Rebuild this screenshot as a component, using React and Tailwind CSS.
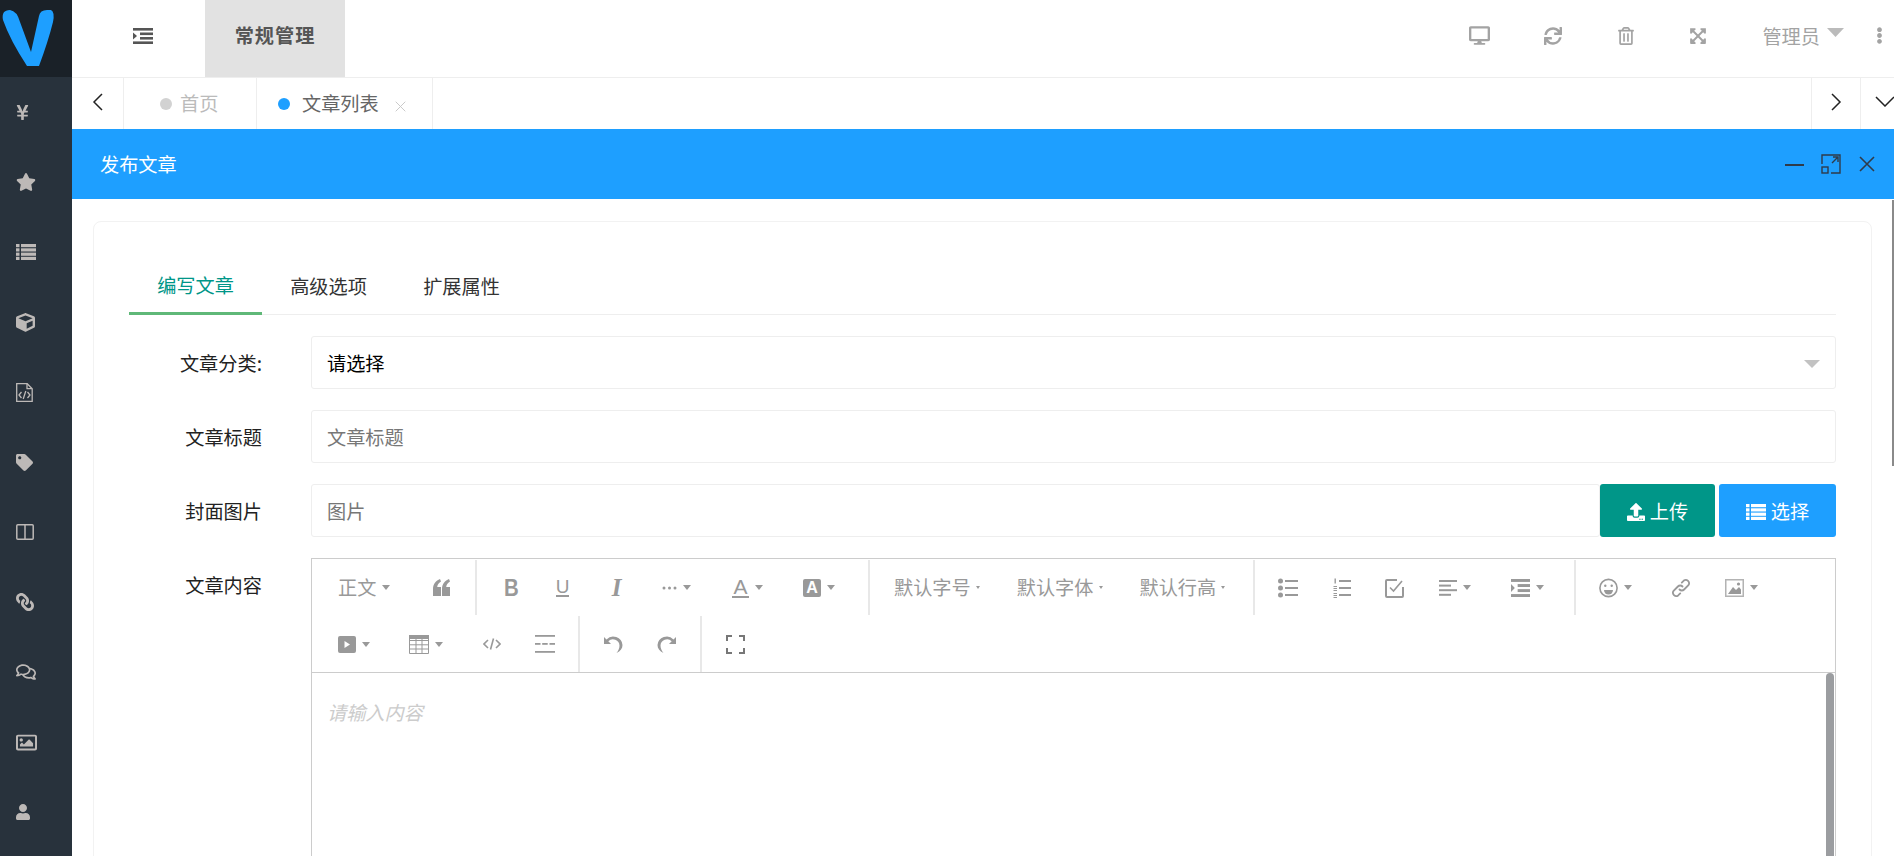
import React from 'react'
import {
  FaYenSign, FaStar, FaCube, FaTag, FaRegComments, FaRegImage, FaUser, FaDesktop, FaSync,
  FaRegTrashAlt, FaExpandArrowsAlt, FaEllipsisV, FaUpload, FaLink,
} from 'react-icons/fa'

const ListIcon = () => (
  <svg width="20" height="16" viewBox="0 0 20 16" fill="currentColor">
    <rect width="3.5" height="3.2" /><rect x="5" width="15" height="3.2" />
    <rect y="4.3" width="3.5" height="3.2" /><rect x="5" y="4.3" width="15" height="3.2" />
    <rect y="8.6" width="3.5" height="3.2" /><rect x="5" y="8.6" width="15" height="3.2" />
    <rect y="12.8" width="3.5" height="3.2" /><rect x="5" y="12.8" width="15" height="3.2" />
  </svg>
)

const Columns = () => (
  <svg width="18" height="16" viewBox="0 0 18 16" fill="none" stroke="currentColor" strokeWidth="1.5">
    <rect x="0.8" y="0.8" width="16.4" height="14.4" rx="1" />
    <path d="M9 1v14" />
  </svg>
)

const FileCode = () => (
  <svg width="17" height="19" viewBox="0 0 17 19" fill="none" stroke="currentColor" strokeWidth="1.3">
    <path d="M.7.7h10.5l5 5v12.6H.7Z" />
    <path d="M11 .7v5h5" />
    <path d="M5.5 9L3 12l2.5 3M11.5 9l2.5 3-2.5 3M9.8 8L7.2 16" />
  </svg>
)

const sideIcons = [
  <FaYenSign size={17} className="-ml-[2px]" />, <FaStar size={20} />, <ListIcon />, <FaCube size={19} />, <FileCode />,
  <FaTag size={17} />, <Columns />, <FaLink size={18} className="-scale-x-100" />, <FaRegComments size={20} />, <FaRegImage size={21} />, <FaUser size={16} className="-ml-[1px]" />,
]

const Logo = () => (
  <svg width="56" height="70" viewBox="0 0 56 70" fill="#1e9fff">
    <path d="M3 20Q1 10 10 10Q17 11 20 22L31 52L39 16Q40 10 47 10L51 10Q55 12 53 22Q48 42 39 66L27 66Q10 40 3 20Z" />
  </svg>
)

const IndentIcon = ({ w = 20, h = 16 }) => (
  <svg width={w} height={h} viewBox="0 0 20 16" fill="currentColor" preserveAspectRatio="none">
    <rect width="20" height="2.6" />
    <rect x="7" y="4.5" width="13" height="2.6" />
    <rect x="7" y="9" width="13" height="2.6" />
    <rect y="13.4" width="20" height="2.6" />
    <path d="M0 4.5L4 8L0 11.5Z" />
  </svg>
)

const Chevron = ({ d, w = 11, h = 18 }) => (
  <svg width={w} height={h} viewBox={`0 0 ${w} ${h}`} fill="none" stroke="currentColor" strokeWidth="1.5">
    <path d={d} />
  </svg>
)

const Cross = ({ size, width = 1.6 }) => (
  <svg width={size} height={size} viewBox="0 0 16 16" fill="none" stroke="currentColor" strokeWidth={width}>
    <path d="M1 1l14 14M15 1L1 15" />
  </svg>
)

const Caret = ({ small }) =>
  small ? (
    <svg width="4" height="3" viewBox="0 0 4 3" fill="#999" className="ml-[5px]"><path d="M0 0h4L2 3Z" /></svg>
  ) : (
    <svg width="8" height="5" viewBox="0 0 8 5" fill="#999" className="ml-[6px]"><path d="M0 0h8L4 5Z" /></svg>
  )

const Quote = () => (
  <svg width="17" height="17" viewBox="0 0 17 17" fill="currentColor">
    <path d="M0 17V10C0 5 3 1.5 7 0L8 2.5C5.5 4 4.4 5.8 4.2 8H8V17Z" />
    <path d="M9 17V10C9 5 12 1.5 16 0L17 2.5C14.5 4 13.4 5.8 13.2 8H17V17Z" />
  </svg>
)

const Dots = () => (
  <svg width="15" height="4" viewBox="0 0 15 4" fill="currentColor">
    <circle cx="2" cy="2" r="1.5" /><circle cx="7.5" cy="2" r="1.5" /><circle cx="13" cy="2" r="1.5" />
  </svg>
)

const BulletList = () => (
  <svg width="20" height="20" viewBox="0 0 20 20" fill="currentColor">
    <circle cx="2.5" cy="3" r="2.5" /><circle cx="2.5" cy="10" r="2.5" /><circle cx="2.5" cy="17" r="2.5" />
    <rect x="7" y="2" width="13" height="2" /><rect x="7" y="9" width="13" height="2" /><rect x="7" y="16" width="13" height="2" />
  </svg>
)

const NumList = () => (
  <svg width="18" height="20" viewBox="0 0 18 20" fill="currentColor">
    <rect x="1.5" y="0.5" width="1.4" height="5" /><rect x="0.5" y="8" width="3.5" height="1" /><rect x="0.5" y="10" width="3.5" height="1" /><rect x="0.5" y="12" width="3.5" height="1" /><rect x="0.5" y="15" width="3.5" height="1" /><rect x="0.5" y="17" width="3.5" height="1" /><rect x="0.5" y="19" width="3.5" height="1" />
    <rect x="6" y="2" width="12" height="2" /><rect x="6" y="9" width="12" height="2" /><rect x="6" y="16" width="12" height="2" />
  </svg>
)

const CheckBox = () => (
  <svg width="19" height="20" viewBox="0 0 19 20" fill="none" stroke="currentColor">
    <path d="M12 2H2a1 1 0 0 0-1 1v15a1 1 0 0 0 1 1h15a1 1 0 0 0 1-1V9" strokeWidth="2" />
    <path d="M5 9.5l3.5 3.5L17 3" strokeWidth="1.6" />
  </svg>
)

const AlignLeft = () => (
  <svg width="18" height="16" viewBox="0 0 18 16" fill="currentColor">
    <rect width="18" height="2" /><rect y="4.6" width="12" height="2" /><rect y="9.2" width="18" height="2" /><rect y="13.8" width="12" height="2" />
  </svg>
)

const Smile = () => (
  <svg width="19" height="20" viewBox="0 0 19 20" fill="none" stroke="currentColor" strokeWidth="1.6">
    <circle cx="9.5" cy="10" r="8.6" />
    <circle cx="6.3" cy="7.8" r="1.2" fill="currentColor" stroke="none" />
    <circle cx="12.7" cy="7.8" r="1.2" fill="currentColor" stroke="none" />
    <path d="M5 12h9a4.5 4.5 0 0 1-9 0Z" fill="currentColor" stroke="none" />
  </svg>
)

const ChainIcon = () => (
  <svg width="20" height="20" viewBox="0 0 20 20" fill="none" stroke="currentColor" strokeWidth="1.8" strokeLinecap="round">
    <path d="M8.5 11.5a3.2 3.2 0 0 0 4.6 0l4.3-4.3a3.3 3.3 0 0 0-4.6-4.6l-2 2" />
    <path d="M11.5 8.5a3.2 3.2 0 0 0-4.6 0l-4.3 4.3a3.3 3.3 0 0 0 4.6 4.6l2-2" />
  </svg>
)

const ImageIcon = () => (
  <svg width="19" height="18" viewBox="0 0 19 18" fill="currentColor">
    <path fillRule="evenodd" d="M0 0h19v18H0ZM1.5 1.5v15h16v-15Z" opacity="0.75" />
    <path d="M3 15l5-7 3 3 3-3 2 2.5V15Z" />
    <circle cx="13.5" cy="5" r="1.6" />
  </svg>
)

const Video = () => (
  <svg width="18" height="17" viewBox="0 0 18 17" fill="currentColor">
    <path fillRule="evenodd" d="M2 0h14a2 2 0 0 1 2 2v13a2 2 0 0 1-2 2H2a2 2 0 0 1-2-2V2a2 2 0 0 1 2-2ZM6.5 5v7L12 8.5Z" />
  </svg>
)

const TableIcon = () => (
  <svg width="20" height="19" viewBox="0 0 20 19" fill="none" stroke="currentColor" strokeWidth="1">
    <path d="M.5.5h19v18H.5ZM.5 5.5h19M.5 9.8h19M.5 14h19M7 4v14.5M13 4v14.5" />
    <rect x="0" y="0" width="20" height="4" fill="currentColor" stroke="none" />
  </svg>
)

const CodeIcon = () => (
  <svg width="18" height="12" viewBox="0 0 18 12" fill="none" stroke="currentColor" strokeWidth="1.6">
    <path d="M5 2L1 6l4 4M13 2l4 4-4 4M10.5 .5L7.5 11.5" />
  </svg>
)

const HrIcon = () => (
  <svg width="20" height="18" viewBox="0 0 20 18" fill="currentColor">
    <rect width="20" height="1.8" /><rect y="8" width="5.5" height="1.8" /><rect x="7.2" y="8" width="5.5" height="1.8" /><rect x="14.5" y="8" width="5.5" height="1.8" /><rect y="16" width="20" height="1.8" />
  </svg>
)

const Undo = ({ flip }) => (
  <svg width="19" height="18" viewBox="0 0 19 18" fill="currentColor" className={flip ? '-scale-x-100' : ''}>
    <path d="M0 2v7h7L4.3 6.3A6.5 6.5 0 0 1 15.5 10.5c0 2.6-1 5-3 7.5 4-2 6-4.5 6-8A9.3 9.3 0 0 0 2.5 4.5Z" />
  </svg>
)

const FullScreen = () => (
  <svg width="19" height="19" viewBox="0 0 19 19" fill="none" stroke="currentColor" strokeWidth="2">
    <path d="M1 6V1h5M13 1h5v5M18 13v5h-5M6 18H1v-5" />
  </svg>
)

const Tool = ({ children, ml = '', caret, small }) => (
  <div className={`flex items-center shrink-0 ${ml}`}>
    {children}
    {caret && <Caret small={small} />}
  </div>
)

const Toolbar = () => (
  <div className="border-b border-[#ccc] text-[#999]">
    <div className="flex h-[57px] py-[1px]">
      <div className="flex items-center w-[165px] pl-[26px] border-r-2 border-[#e8e8e8]">
        <Tool caret><span>正文</span></Tool>
        <Tool ml="ml-[43px]"><Quote /></Tool>
      </div>
      <div className="flex items-center w-[393px] pl-[27px] border-r-2 border-[#e8e8e8]">
        <Tool><span className="font-['Liberation_Sans'] font-bold text-[24px] leading-none w-[13px] scale-x-[0.85] origin-left">B</span></Tool>
        <Tool ml="ml-[39px]"><span className="font-['Liberation_Sans'] text-[19px] leading-[17px] border-b-2 border-[#999] w-[13px] flex justify-center">U</span></Tool>
        <Tool ml="ml-[41px]"><span className="font-['Liberation_Serif'] italic font-bold text-[25px] leading-none w-[13px] flex justify-center">I</span></Tool>
        <Tool ml="ml-[39px]" caret><Dots /></Tool>
        <Tool ml="ml-[41px]" caret><span className="font-['Liberation_Sans'] text-[21px] leading-[18px] border-b-2 border-[#999] w-[17px] flex justify-center">A</span></Tool>
        <Tool ml="ml-[40px]" caret><span className="bg-[#999] text-white rounded-[2px] font-['Liberation_Sans'] font-bold text-[16px] w-[18px] h-[18px] leading-[18px] flex justify-center">A</span></Tool>
      </div>
      <div className="flex items-center w-[385px] pl-[24px] border-r-2 border-[#e8e8e8]">
        <Tool caret small><span>默认字号</span></Tool>
        <Tool ml="ml-[37px]" caret small><span>默认字体</span></Tool>
        <Tool ml="ml-[37px]" caret small><span>默认行高</span></Tool>
      </div>
      <div className="flex items-center w-[321px] pl-[23px] border-r-2 border-[#e8e8e8]">
        <Tool><BulletList /></Tool>
        <Tool ml="ml-[35px]"><NumList /></Tool>
        <Tool ml="ml-[34px]"><CheckBox /></Tool>
        <Tool ml="ml-[35px]" caret><AlignLeft /></Tool>
        <Tool ml="ml-[40px]" caret><IndentIcon w={19} h={18} /></Tool>
      </div>
      <div className="flex items-center pl-[23px]">
        <Tool caret><Smile /></Tool>
        <Tool ml="ml-[39px]"><ChainIcon /></Tool>
        <Tool ml="ml-[34px]" caret><ImageIcon /></Tool>
      </div>
    </div>
    <div className="flex h-[56px]">
      <div className="flex items-center w-[268px] pl-[26px] border-r-2 border-[#e8e8e8]">
        <Tool caret><Video /></Tool>
        <Tool ml="ml-[39px]" caret><TableIcon /></Tool>
        <Tool ml="ml-[40px]"><CodeIcon /></Tool>
        <Tool ml="ml-[34px]"><HrIcon /></Tool>
      </div>
      <div className="flex items-center w-[122px] pl-[24px] border-r-2 border-[#e8e8e8]">
        <Tool><Undo /></Tool>
        <Tool ml="ml-[34px]"><Undo flip /></Tool>
      </div>
      <div className="flex items-center pl-[24px] text-[#777]"><FullScreen /></div>
    </div>
  </div>
)

const FormRow = ({ label, children, top }) => (
  <div className="flex mb-[21px]">
    <label className={`w-[133px] shrink-0 mr-[49px] text-right text-[#222] ${top ? 'pt-[12px] leading-[30px]' : 'h-[53px] leading-[55px]'}`}>{label}</label>
    <div className="flex-1 min-w-0">{children}</div>
  </div>
)

const TextField = ({ children, className = '' }) => (
  <div className={`h-[53px] border border-[#eee] rounded-[3px] pl-[15px] pt-[2px] flex items-center ${className}`}>{children}</div>
)

const App = () => {
  return (
    <div className="relative flex h-screen overflow-hidden bg-white text-[19.2px] [font-family:'Noto_Sans_CJK_SC','Noto_Sans',sans-serif]">
      <aside className="w-[72px] shrink-0 bg-[#28323c] text-[#bdb9b7]">
        <div className="h-[77px] bg-[#1a2128] overflow-hidden"><Logo /></div>
        {sideIcons.map((icon, i) => (
          <div key={i} className="h-[70px] flex items-center pl-[16px]">{icon}</div>
        ))}
      </aside>

      <main className="flex-1 min-w-0 flex flex-col">
        <header className="h-[77px] shrink-0 flex items-center text-[#a3a3a3]">
          <div className="w-[133px] pl-[61px] pb-[5px] text-[#555]"><IndentIcon /></div>
          <div className="w-[140px] h-full pb-[6px] bg-[#e2e2e2] text-[#555] font-bold flex items-center justify-center tracking-[1px]">常规管理</div>
          <div className="ml-auto flex items-center pb-[5px]">
            <FaDesktop size={21} />
            <FaSync size={18} className="ml-[54px]" />
            <FaRegTrashAlt size={18} className="ml-[55px]" />
            <FaExpandArrowsAlt size={18} className="ml-[54px]" />
            <span className="ml-[55px]">管理员</span>
            <svg width="17" height="9" viewBox="0 0 17 9" fill="#bbb" className="ml-[7px] mb-[6px]"><path d="M0 0h17L8.5 9Z" /></svg>
            <FaEllipsisV size={17} className="ml-[27px] mr-[6px]" />
          </div>
        </header>

        <nav className="h-[52px] shrink-0 border-t border-[#eee] flex items-stretch">
          <div className="w-[52px] border-r border-[#eee] flex items-center justify-center text-[#222] pb-[4px]"><Chevron d="M10 1L2 9l8 8" /></div>
          <div className="w-[133px] border-r border-[#eee] flex items-center pl-[36px] text-[#bbb]">
            <span className="w-[12px] h-[12px] rounded-full bg-[#d2d2d2] mr-[8px]" />首页
          </div>
          <div className="w-[176px] border-r border-[#eee] flex items-center pl-[21px] text-[#666]">
            <span className="w-[12px] h-[12px] rounded-full bg-[#1e9fff] mr-[12px]" />文章列表
            <div className="ml-[16px] mt-[5px] text-[#c8c8c8]"><Cross size={11} width={1.4} /></div>
          </div>
          <div className="ml-auto w-[49px] border-l border-[#eee] flex items-center justify-center text-[#222] pb-[4px]"><Chevron d="M1 1l8 8-8 8" /></div>
          <div className="w-[34px] border-l border-[#eee] flex items-center pl-[14px] text-[#222] pb-[4px] overflow-hidden"><div className="shrink-0"><Chevron w={20} h={11} d="M1 1l9 9 9-9" /></div></div>
        </nav>

        <div className="h-[70px] shrink-0 bg-[#1e9fff] flex items-center pl-[28px] text-white">
          发布文章
          <div className="ml-auto flex items-center text-[#2f3b4a] pr-[19px]">
            <div className="w-[19px] h-[2px] bg-[#2f3b4a] mt-[2px]" />
            <svg width="20" height="20" viewBox="0 0 20 20" fill="none" stroke="currentColor" strokeWidth="1.4" className="ml-[17px]">
              <path d="M1 10V1h18v18h-9M11 9l6-6M12 3h5v5" />
              <rect x="1" y="13" width="6" height="6" />
            </svg>
            <div className="ml-[18px]"><Cross size={16} /></div>
          </div>
        </div>

        <div className="flex-1 min-h-0 overflow-hidden pt-[22px] pl-[21px] pr-[22px]">
          <div className="border border-[#f2f2f2] rounded-lg pt-[37px] px-[35px]">
            <div className="flex h-[56px] border-b border-[#eee] mb-[21px] text-[#333]">
              <div className="w-[133px] h-[56px] border-b-[3px] border-[#5fb878] text-[#009688] flex items-center justify-center">编写文章</div>
              <div className="w-[133px] flex items-center justify-center">高级选项</div>
              <div className="w-[133px] flex items-center justify-center">扩展属性</div>
            </div>

            <FormRow label="文章分类:">
              <TextField className="justify-between pr-[15px] text-black">
                请选择
                <svg width="16" height="8" viewBox="0 0 16 8" fill="#c2c2c2"><path d="M0 0h16L8 8Z" /></svg>
              </TextField>
            </FormRow>
            <FormRow label="文章标题">
              <TextField className="text-[#777]">文章标题</TextField>
            </FormRow>
            <FormRow label="封面图片">
              <div className="flex">
                <TextField className="flex-1 text-[#777]">图片</TextField>
                <button className="w-[115px] h-[53px] bg-[#009688] text-white rounded-[3px] flex items-center justify-center gap-[5px] pt-[2px]">
                  <FaUpload size={18} />上传
                </button>
                <button className="w-[117px] h-[53px] ml-[4px] bg-[#1e9fff] text-white rounded-[3px] flex items-center justify-center gap-[5px] pt-[2px]">
                  <ListIcon />选择
                </button>
              </div>
            </FormRow>
            <FormRow label="文章内容" top>
              <div className="relative border border-[#ccc] h-[600px]">
                <Toolbar />
                <div className="pl-[15px] pt-[25px] italic text-[#ccc]">请输入内容</div>
                <div className="absolute right-[1px] top-[114px] bottom-0 w-[8px] rounded-full bg-[#9b9da0]" />
              </div>
            </FormRow>
          </div>
        </div>
      </main>

      <div className="absolute right-0 top-[200px] h-[266px] w-[2px] bg-[#8a8a8a]" />
    </div>
  )
}

export default App
